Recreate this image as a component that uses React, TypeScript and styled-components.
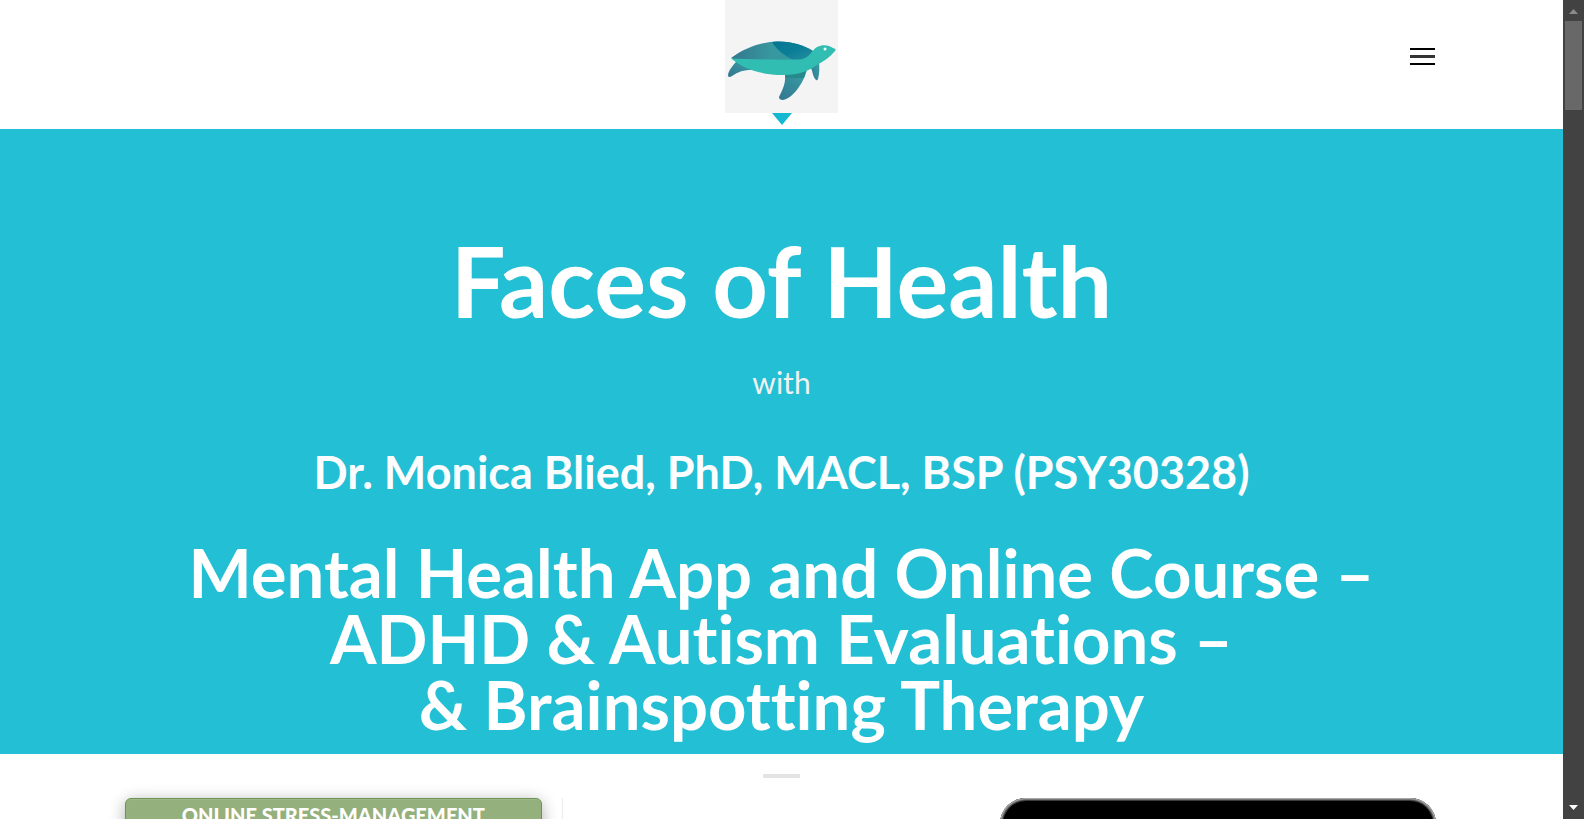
import React from "react";
import styled, { createGlobalStyle } from "styled-components";

const GlobalStyle = createGlobalStyle`
  *, *::before, *::after { box-sizing: border-box; }
  body {
    margin: 0;
    background: #fff;
    font-family: Lato, "Liberation Sans", sans-serif;
    font-variant-ligatures: none;
  }
`;

const Frame = styled.div`
  display: flex;
  height: 100vh;
  overflow: hidden;
`;

const Page = styled.div`
  flex: 1;
  min-width: 0;
  overflow: hidden;
`;

const Header = styled.header`
  display: grid;
  grid-template-columns: 1fr auto 1fr;
  align-items: start;
  width: 84%;
  height: 129px;
  margin: 0 auto;
`;

const LogoLink = styled.a`
  grid-column: 2;
  display: flex;
  flex-direction: column;
  align-items: center;
`;

const LogoImage = styled.svg`
  display: block;
  width: 113px;
  height: 113px;
  background: #f4f4f4;
`;

const Pointer = styled.svg`
  display: block;
  width: 20px;
  height: 12px;
  fill: #16b7d1;
`;

const MenuButton = styled.button`
  justify-self: end;
  display: flex;
  align-items: center;
  height: 112px;
  margin: 0 3px 0 0;
  padding: 0;
  border: 0;
  background: none;
  color: #111;
`;

const Hero = styled.section`
  display: flex;
  flex-direction: column;
  align-items: center;
  padding: 102px 0 17px;
  background: #23bfd4;
  color: #fff;
  text-align: center;
`;

const Title = styled.h1`
  margin: 0 0 27px;
  font-size: 97px;
  line-height: 100px;
  font-weight: 700;
`;

const Joiner = styled.p`
  margin: 0 0 36px;
  font-size: 30px;
  line-height: 48px;
  color: #f1f1f1;
`;

const Name = styled.h2`
  margin: 0 0 37px;
  font-size: 45px;
  line-height: 60px;
  font-weight: 700;
  color: #fcfdfe;
`;

const Services = styled.h2`
  margin: 0;
  font-size: 67px;
  line-height: 66px;
  font-weight: 700;
`;

const Divider = styled.hr`
  width: 37px;
  height: 4px;
  margin: 20px auto;
  border: 0;
  background: #e4e4e4;
`;

const Columns = styled.section`
  display: grid;
  grid-template-columns: repeat(3, 1fr);
  width: 84%;
  margin: 0 auto;
`;

const Column = styled.div<{ $ruled?: boolean }>`
  min-width: 0;
  padding-right: ${(p) => (p.$ruled ? "20px" : "2px")};
  border-right: ${(p) => (p.$ruled ? "1px solid #ececec" : "0")};
`;

const CourseButton = styled.a`
  display: block;
  padding: 4px 16px;
  border: 1px solid #6e9252;
  border-radius: 6px;
  background: #94b07c;
  box-shadow: 0 3px 16px rgba(0, 0, 0, 0.32), inset 0 1px 0 #a0b98b;
  color: #fff;
  font-size: 20px;
  line-height: 24px;
  font-weight: 900;
  text-align: center;
  text-decoration: none;
`;

const Phone = styled.div`
  height: 800px;
  border-radius: 26px;
  background: #000;
  box-shadow: inset 0 0 0 1px #a8a8a8, inset 0 0 0 2px #777, inset 0 0 0 3px #3c3c3c;
`;

const ScrollTrack = styled.div`
  display: flex;
  flex-direction: column;
  justify-content: space-between;
  align-items: center;
  width: 21px;
  background: #424242;
`;

const ScrollTop = styled.div`
  display: flex;
  flex-direction: column;
  align-items: center;
`;

const Arrow = styled.svg<{ $color: string }>`
  display: block;
  width: 21px;
  height: 21px;
  fill: ${(p) => p.$color};
`;

const Thumb = styled.div`
  width: 17px;
  height: 89px;
  background: #686868;
`;

function Turtle() {
  return (
    <LogoImage viewBox="0 0 113 113" role="img" aria-label="Faces of Health">
      <defs>
        <linearGradient id="shell" x1="0" x2="1">
          <stop offset="0" stopColor="#34788f" />
          <stop offset="0.5" stopColor="#38989f" />
          <stop offset="1" stopColor="#2d9aa2" />
        </linearGradient>
        <linearGradient id="patch" x1="0" y1="0" x2="1" y2="1">
          <stop offset="0" stopColor="#037592" />
          <stop offset="0.5" stopColor="#0b7e97" />
          <stop offset="1" stopColor="#2a8f9f" />
        </linearGradient>
        <linearGradient id="fin" x1="0" y1="1" x2="1" y2="0">
          <stop offset="0" stopColor="#337691" />
          <stop offset="1" stopColor="#37a1a5" />
        </linearGradient>
      </defs>
      <path fill="url(#fin)" d="M12 61C8 65 3 71 3 76Q4 78 7 76C14 71 22 69 31 70Z" />
      <path fill="url(#fin)" d="M60 73C61 83 58 89 54 97Q54 100 58 100C68 98 78 84 82 70Z" />
      <path fill="#26898c" d="M60 74Q72 74 81 70L79 78H60Z" />
      <path fill="url(#fin)" d="M86 68C88 73 88 77 91 80Q92 81 93 79Q95 72 94 62Z" />
      <path fill="url(#shell)" d="M6 58C23 46 38 42 53 41.500C66 41.500 78 45 88 51L80 62H14Z" />
      <path fill="url(#patch)" d="M47 42C64 40 78 45 88 51Q85 57 80 61H71C60 57 51 49 47 42Z" />
      <path
        fill="#31bdb1"
        d="M6 58.500C25 59 51 60 75 59.500C85 58 86 51 92 47C98 44 104 45 108 48Q112 49 110 51C103 59 97 62 92 65C80 74 68 75 53 75C33 74 18 68 6 58.500Z"
      />
      <circle cx="100" cy="49" r="1.500" fill="#effffc" />
    </LogoImage>
  );
}

export default function App() {
  return (
    <>
      <GlobalStyle />
      <Frame>
        <Page>
          <Header>
            <LogoLink href="#" aria-label="Faces of Health home">
              <Turtle />
              <Pointer viewBox="0 0 20 12" aria-hidden="true">
                <path d="M0 0H20L10 12Z" />
              </Pointer>
            </LogoLink>
            <MenuButton type="button" aria-label="Menu">
              <svg width="25" height="18" viewBox="0 0 25 18" aria-hidden="true">
                <path d="M0 1H25V3H0ZM0 16H25V18H0Z" fill="#000" />
                <path d="M0 8H25V11H0Z" fill="#333" />
              </svg>
            </MenuButton>
          </Header>
          <main>
            <Hero>
              <Title>Faces of Health</Title>
              <Joiner>with</Joiner>
              <Name>Dr. Monica Blied, PhD, MACL, BSP (PSY30328)</Name>
              <Services>
                Mental Health App and Online Course –<br />
                ADHD &amp; Autism Evaluations –<br />
                &amp; Brainspotting Therapy
              </Services>
            </Hero>
            <Divider />
            <Columns>
              <Column $ruled>
                <CourseButton href="#">ONLINE STRESS-MANAGEMENT</CourseButton>
              </Column>
              <Column />
              <Column>
                <Phone />
              </Column>
            </Columns>
          </main>
        </Page>
        <ScrollTrack aria-hidden="true">
          <ScrollTop>
            <Arrow $color="#8a8a8a" viewBox="0 0 21 21">
              <path d="M6 14H15L10.500 9Z" />
            </Arrow>
            <Thumb />
          </ScrollTop>
          <Arrow $color="#fff" viewBox="0 0 21 21">
            <path d="M6 7H15L10.500 12Z" />
          </Arrow>
        </ScrollTrack>
      </Frame>
    </>
  );
}
